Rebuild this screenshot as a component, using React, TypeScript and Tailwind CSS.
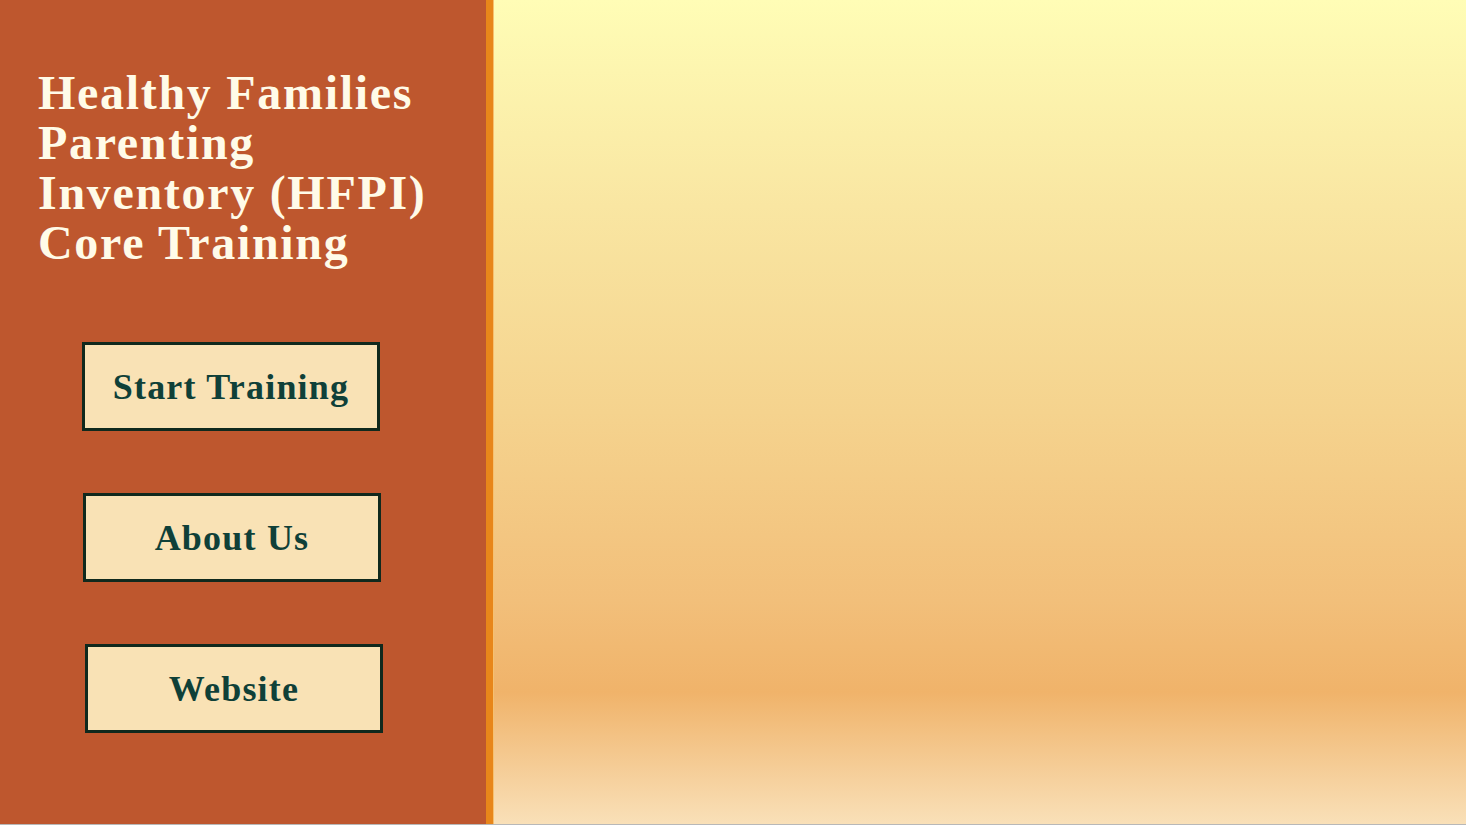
const serif = "font-['Palatino_Linotype','Book_Antiqua','Liberation_Serif',serif]";

function MenuButton({ label, className }: { label: string; className: string }) {
  return (
    <button
      className={`w-[298px] h-[89px] border-[3px] border-[#10291d] bg-[#f9e2b5] text-[#0f4038] text-[36px] tracking-[1.2px] font-bold leading-none ${serif} ${className}`}
    >
      {label}
    </button>
  );
}

export default function App() {
  return (
    <div className="w-[1466px] h-[825px] flex overflow-hidden border-b border-[#b8b8b8]">
      {/* Sidebar */}
      <div className="w-[486px] shrink-0 bg-[#be572e] flex flex-col">
        <h1
          className={`pl-[38px] pt-[68px] text-[48px] leading-[50px] font-bold text-[#fffbe8] tracking-[1.7px] ${serif}`}
        >
          Healthy Families
          <br />
          Parenting
          <br />
          Inventory (HFPI)
          <br />
          Core Training
        </h1>
        <div className="flex flex-col mt-[74px] gap-[62px]">
          <MenuButton label="Start Training" className="ml-[82px]" />
          <MenuButton label="About Us" className="ml-[83px]" />
          <MenuButton label="Website" className="ml-[85px]" />
        </div>
      </div>
      {/* Accent stripe */}
      <div className="w-[7px] shrink-0 bg-[#e8861a]" />
      <div className="w-px shrink-0 bg-[#f6c070]" />
      {/* Content area */}
      <div className="flex-1 bg-[linear-gradient(to_bottom,#fffdb6_0%,#f9e6a2_25%,#f5d38e_50%,#f2bf7a_73%,#f0b36a_84%,#f9e0b8_100%)]" />
    </div>
  );
}
